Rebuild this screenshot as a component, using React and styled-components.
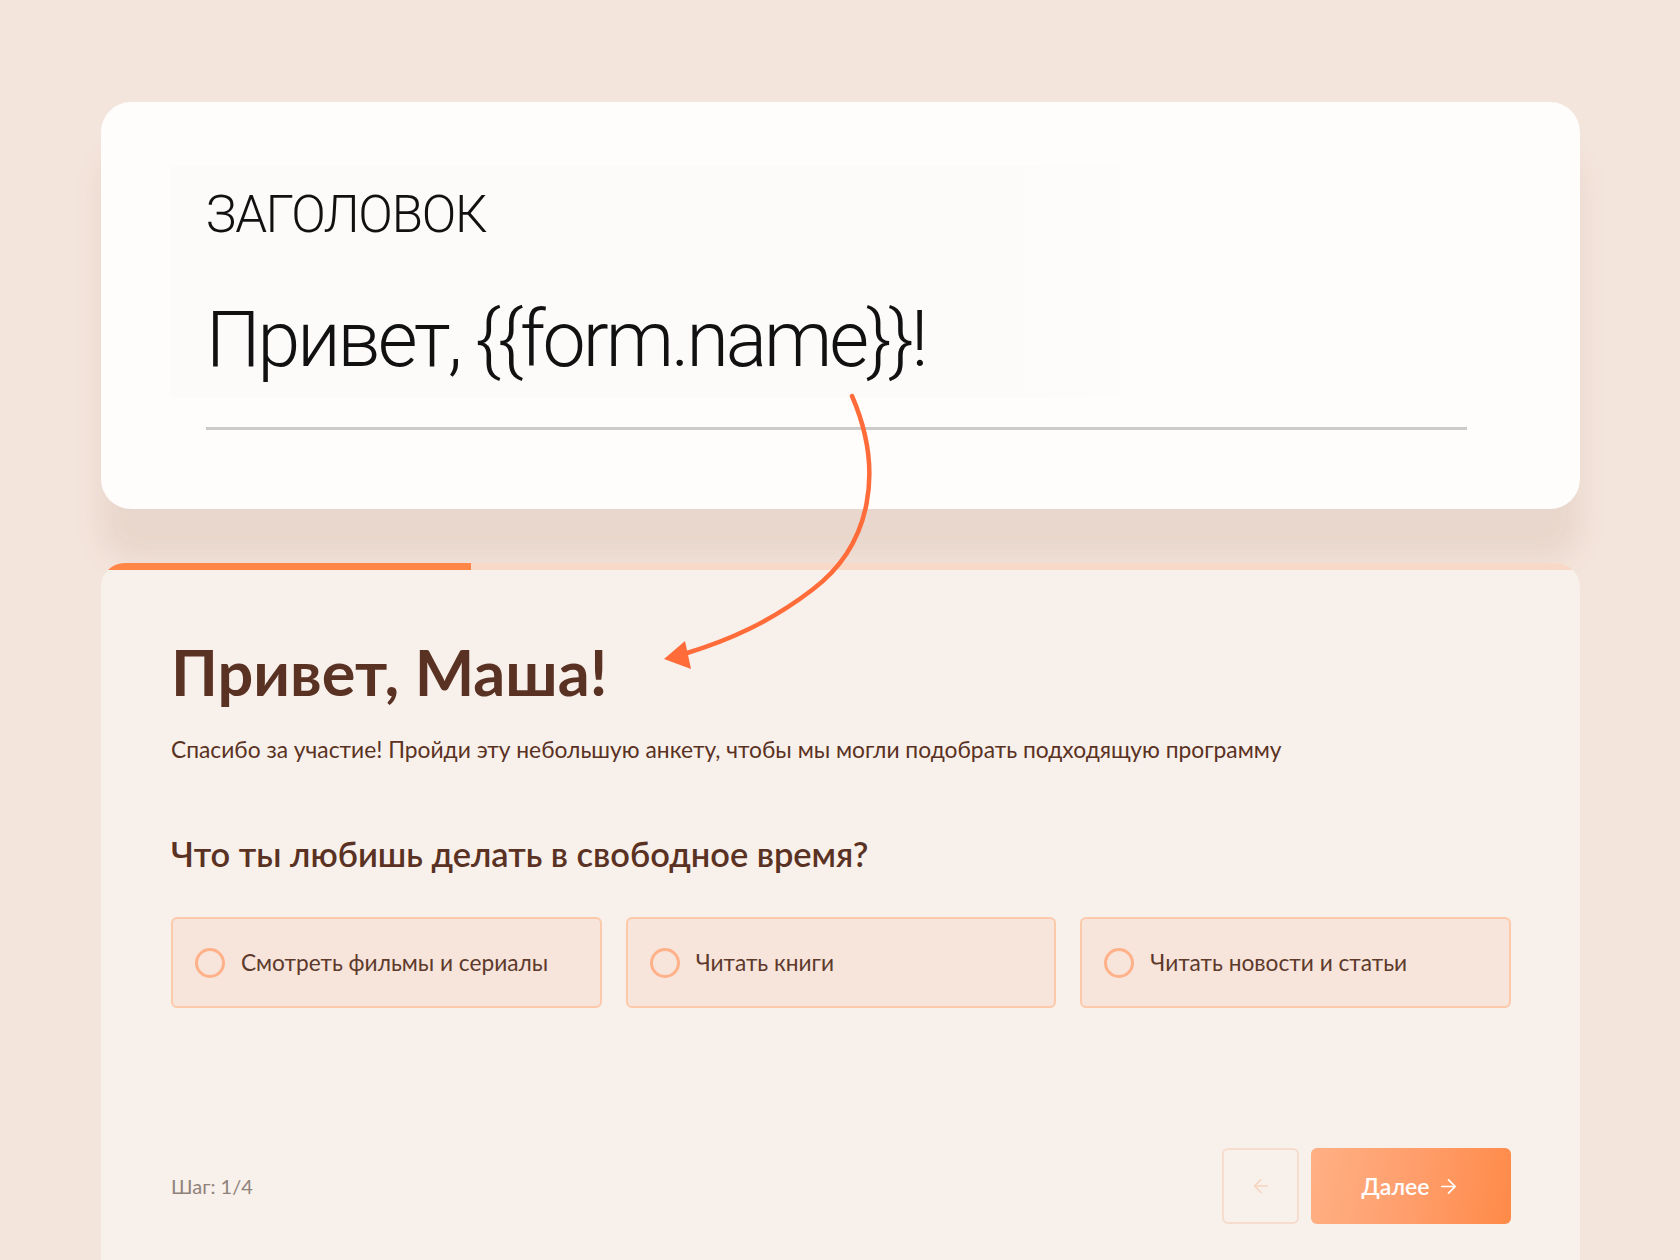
import React from "react";
import styled, { createGlobalStyle } from "styled-components";
import { ArrowLeft, ArrowRight } from "lucide-react";

const GlobalStyle = createGlobalStyle`
  html, body {
    margin: 0;
    padding: 0;
    overflow: hidden;
  }
  body {
    background: #f4e5dc;
    font-family: "Lato", "Noto Sans", sans-serif;
  }
`;

const Page = styled.div`
  position: relative;
  width: 1680px;
  height: 1260px;
  box-sizing: border-box;
  padding: 102px 100px 0 101px;
  display: flex;
  flex-direction: column;
  gap: 54px;
  overflow: hidden;
`;

/* editor card (top) */
const EditorCard = styled.section`
  height: 407px;
  box-sizing: border-box;
  padding: 87px 113px 0 105px;
  border-radius: 30px;
  background:
    linear-gradient(90deg, #fdfafa, #fdfafa 75%, rgba(253, 250, 250, 0)) no-repeat 70px 64px / 1080px 232px,
    #fffcfc;
  box-shadow: 0 50px 30px rgba(120, 70, 40, 0.09);
`;

const EditorLabel = styled.div`
  font-family: "Roboto", sans-serif;
  font-weight: 300;
  font-size: 51px;
  line-height: 52px;
  letter-spacing: -1.2px;
  color: #111;
`;

const EditorTitle = styled.div`
  margin-top: 56px;
  font-family: "Roboto", sans-serif;
  font-weight: 300;
  font-size: 77px;
  line-height: 86px;
  letter-spacing: -3px;
  color: #111;
  white-space: nowrap;
`;

const Divider = styled.div`
  margin-top: 44px;
  height: 3px;
  background: #cbcbcb;
`;

/* form preview (bottom) */
const FormCard = styled.section`
  flex: 1;
  display: flex;
  flex-direction: column;
  border-radius: 24px 24px 0 0;
  background: #f8f0ea;
  overflow: hidden;
`;

const ProgressTrack = styled.div`
  height: 7px;
  background: #f8d8c6;
  flex-shrink: 0;
`;

const ProgressFill = styled.div`
  height: 100%;
  background: #ff8646;
`;

const FormBody = styled.div`
  padding: 62px 69px 0 70px;
  display: flex;
  flex-direction: column;
`;

const Greeting = styled.h1`
  margin: 0;
  font-weight: 700;
  font-size: 63px;
  line-height: 80px;
  color: #5a3223;
`;

const Intro = styled.p`
  margin: 25px 0 0;
  font-size: 22.8px;
  line-height: 25px;
  color: #5a3223;
`;

const Question = styled.h2`
  margin: 73px 0 0;
  font-weight: 600;
  font-size: 34.4px;
  line-height: 38px;
  color: #5a3223;
`;

const Options = styled.div`
  margin-top: 44px;
  display: grid;
  grid-template-columns: repeat(3, 1fr);
  gap: 24px;
`;

const Option = styled.label`
  height: 91px;
  box-sizing: border-box;
  display: flex;
  align-items: center;
  gap: 16px;
  padding-left: 22px;
  border: 2px solid #fcc9ab;
  border-radius: 6px;
  background: #f7e4da;
  font-size: 22.7px;
  color: #5d3a2c;
  cursor: pointer;
`;

const Radio = styled.span`
  width: 30px;
  height: 30px;
  box-sizing: border-box;
  border: 3px solid #ffb189;
  border-radius: 50%;
  flex-shrink: 0;
`;

const Footer = styled.div`
  margin-top: 140px;
  display: flex;
  justify-content: space-between;
  align-items: center;
`;

const StepLabel = styled.span`
  font-size: 20px;
  color: #8f827b;
`;

const Buttons = styled.div`
  display: flex;
  gap: 12px;
`;

const BackButton = styled.button`
  width: 77px;
  height: 76px;
  display: flex;
  align-items: center;
  justify-content: center;
  border: 2px solid #f6dccd;
  border-radius: 6px;
  background: transparent;
  color: #f5d3bf;
  padding: 0;
`;

const NextButton = styled.button`
  width: 200px;
  height: 76px;
  display: flex;
  align-items: center;
  justify-content: center;
  gap: 8px;
  border: none;
  border-radius: 6px;
  background: linear-gradient(100deg, #ffb085 0%, #ff9e6c 50%, #ff8a48 100%);
  color: #fff;
  font-family: "Lato", sans-serif;
  font-weight: 600;
  font-size: 23px;
  padding: 0;
`;

const Pointer = styled.svg`
  position: absolute;
  top: 0;
  left: 0;
  pointer-events: none;
`;

const options = [
  "Смотреть фильмы и сериалы",
  "Читать книги",
  "Читать новости и статьи",
];

export default function App() {
  const step = 1;
  const total = 4;

  return (
    <>
      <GlobalStyle />
      <Page>
        <EditorCard>
          <EditorLabel>ЗАГОЛОВОК</EditorLabel>
          <EditorTitle>Привет, {"{{form.name}}"}!</EditorTitle>
          <Divider />
        </EditorCard>

        <FormCard>
          <ProgressTrack>
            <ProgressFill style={{ width: `${(step / total) * 100}%` }} />
          </ProgressTrack>
          <FormBody>
            <Greeting>Привет, Маша!</Greeting>
            <Intro>
              Спасибо за участие! Пройди эту небольшую анкету, чтобы мы могли
              подобрать подходящую программу
            </Intro>
            <Question>Что ты любишь делать в свободное время?</Question>
            <Options>
              {options.map((text) => (
                <Option key={text}>
                  <Radio />
                  {text}
                </Option>
              ))}
            </Options>
            <Footer>
              <StepLabel>
                Шаг: {step}/{total}
              </StepLabel>
              <Buttons>
                <BackButton>
                  <ArrowLeft size={22} strokeWidth={1.6} />
                </BackButton>
                <NextButton>
                  Далее
                  <ArrowRight size={23} strokeWidth={1.8} />
                </NextButton>
              </Buttons>
            </Footer>
          </FormBody>
        </FormCard>

        <Pointer width="1680" height="1260" viewBox="0 0 1680 1260">
          <path
            d="M852 396 C 884 470, 872 545, 812 590 C 770 622, 730 640, 684 654"
            fill="none"
            stroke="#ff6c3a"
            strokeWidth="4.5"
            strokeLinecap="round"
          />
          <path d="M664 659 L685 641 L691 669 Z" fill="#ff6c3a" />
        </Pointer>
      </Page>
    </>
  );
}
